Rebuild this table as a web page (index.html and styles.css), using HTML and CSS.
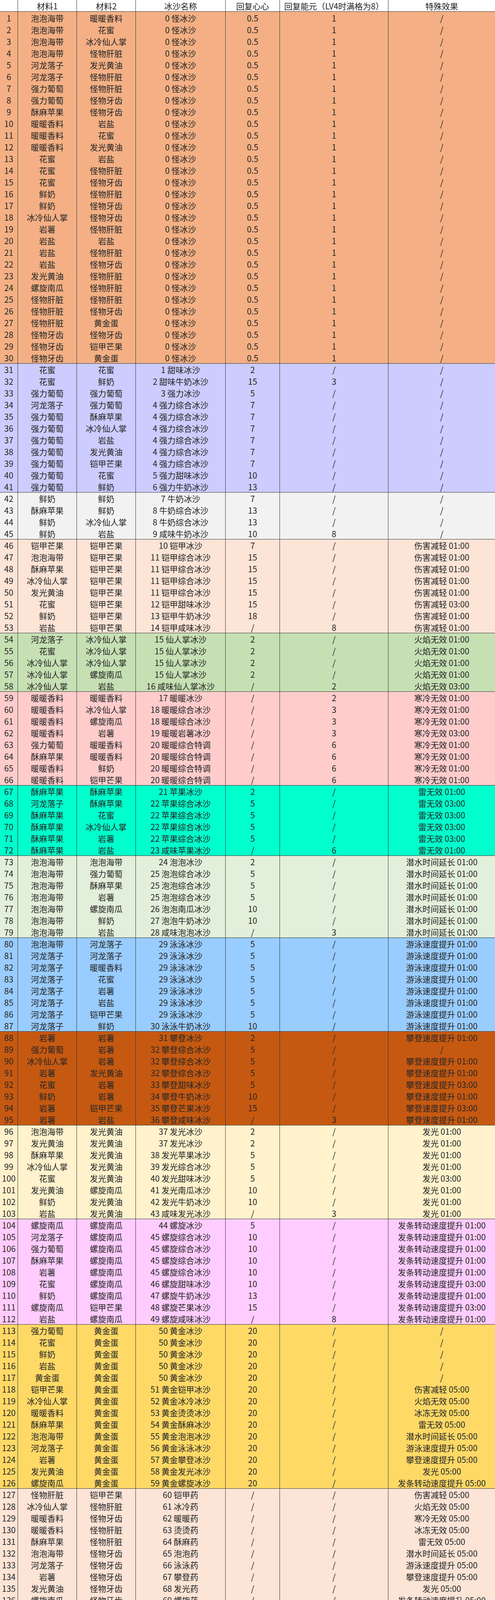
FILE: index.html
```html
<!DOCTYPE html>
<html lang="zh-CN">
<head>
<meta charset="utf-8">
<title>冰沙配方表</title>
<link rel="stylesheet" href="styles.css">
</head>
<body>
<div class="sheet">
  <div class="row head"><span></span><span>材料1</span><span>材料2</span><span>冰沙名称</span><span>回复心心</span><span>回复能元（LV4时满格为8）</span><span>特殊效果</span></div>

  <section class="grp g1">
    <div class="row"><span>1</span><span>泡泡海带</span><span>暖暖香料</span><span>0 怪冰沙</span><span>0.5</span><span>1</span><span>/</span></div>
    <div class="row"><span>2</span><span>泡泡海带</span><span>花蜜</span><span>0 怪冰沙</span><span>0.5</span><span>1</span><span>/</span></div>
    <div class="row"><span>3</span><span>泡泡海带</span><span>冰冷仙人掌</span><span>0 怪冰沙</span><span>0.5</span><span>1</span><span>/</span></div>
    <div class="row"><span>4</span><span>泡泡海带</span><span>怪物肝脏</span><span>0 怪冰沙</span><span>0.5</span><span>1</span><span>/</span></div>
    <div class="row"><span>5</span><span>河龙落子</span><span>发光黄油</span><span>0 怪冰沙</span><span>0.5</span><span>1</span><span>/</span></div>
    <div class="row"><span>6</span><span>河龙落子</span><span>怪物肝脏</span><span>0 怪冰沙</span><span>0.5</span><span>1</span><span>/</span></div>
    <div class="row"><span>7</span><span>强力葡萄</span><span>怪物肝脏</span><span>0 怪冰沙</span><span>0.5</span><span>1</span><span>/</span></div>
    <div class="row"><span>8</span><span>强力葡萄</span><span>怪物牙齿</span><span>0 怪冰沙</span><span>0.5</span><span>1</span><span>/</span></div>
    <div class="row"><span>9</span><span>酥麻苹果</span><span>怪物牙齿</span><span>0 怪冰沙</span><span>0.5</span><span>1</span><span>/</span></div>
    <div class="row"><span>10</span><span>暖暖香料</span><span>岩盐</span><span>0 怪冰沙</span><span>0.5</span><span>1</span><span>/</span></div>
    <div class="row"><span>11</span><span>暖暖香料</span><span>花蜜</span><span>0 怪冰沙</span><span>0.5</span><span>1</span><span>/</span></div>
    <div class="row"><span>12</span><span>暖暖香料</span><span>发光黄油</span><span>0 怪冰沙</span><span>0.5</span><span>1</span><span>/</span></div>
    <div class="row"><span>13</span><span>花蜜</span><span>岩盐</span><span>0 怪冰沙</span><span>0.5</span><span>1</span><span>/</span></div>
    <div class="row"><span>14</span><span>花蜜</span><span>怪物肝脏</span><span>0 怪冰沙</span><span>0.5</span><span>1</span><span>/</span></div>
    <div class="row"><span>15</span><span>花蜜</span><span>怪物牙齿</span><span>0 怪冰沙</span><span>0.5</span><span>1</span><span>/</span></div>
    <div class="row"><span>16</span><span>鲜奶</span><span>怪物肝脏</span><span>0 怪冰沙</span><span>0.5</span><span>1</span><span>/</span></div>
    <div class="row"><span>17</span><span>鲜奶</span><span>怪物牙齿</span><span>0 怪冰沙</span><span>0.5</span><span>1</span><span>/</span></div>
    <div class="row"><span>18</span><span>冰冷仙人掌</span><span>怪物牙齿</span><span>0 怪冰沙</span><span>0.5</span><span>1</span><span>/</span></div>
    <div class="row"><span>19</span><span>岩薯</span><span>怪物肝脏</span><span>0 怪冰沙</span><span>0.5</span><span>1</span><span>/</span></div>
    <div class="row"><span>20</span><span>岩盐</span><span>岩盐</span><span>0 怪冰沙</span><span>0.5</span><span>1</span><span>/</span></div>
    <div class="row"><span>21</span><span>岩盐</span><span>怪物肝脏</span><span>0 怪冰沙</span><span>0.5</span><span>1</span><span>/</span></div>
    <div class="row"><span>22</span><span>岩盐</span><span>怪物牙齿</span><span>0 怪冰沙</span><span>0.5</span><span>1</span><span>/</span></div>
    <div class="row"><span>23</span><span>发光黄油</span><span>怪物肝脏</span><span>0 怪冰沙</span><span>0.5</span><span>1</span><span>/</span></div>
    <div class="row"><span>24</span><span>螺旋南瓜</span><span>怪物肝脏</span><span>0 怪冰沙</span><span>0.5</span><span>1</span><span>/</span></div>
    <div class="row"><span>25</span><span>怪物肝脏</span><span>怪物肝脏</span><span>0 怪冰沙</span><span>0.5</span><span>1</span><span>/</span></div>
    <div class="row"><span>26</span><span>怪物肝脏</span><span>怪物牙齿</span><span>0 怪冰沙</span><span>0.5</span><span>1</span><span>/</span></div>
    <div class="row"><span>27</span><span>怪物肝脏</span><span>黄金蛋</span><span>0 怪冰沙</span><span>0.5</span><span>1</span><span>/</span></div>
    <div class="row"><span>28</span><span>怪物牙齿</span><span>怪物牙齿</span><span>0 怪冰沙</span><span>0.5</span><span>1</span><span>/</span></div>
    <div class="row"><span>29</span><span>怪物牙齿</span><span>铠甲芒果</span><span>0 怪冰沙</span><span>0.5</span><span>1</span><span>/</span></div>
    <div class="row"><span>30</span><span>怪物牙齿</span><span>黄金蛋</span><span>0 怪冰沙</span><span>0.5</span><span>1</span><span>/</span></div>
  </section>

  <section class="grp g2">
    <div class="row"><span>31</span><span>花蜜</span><span>花蜜</span><span>1 甜味冰沙</span><span>2</span><span>/</span><span>/</span></div>
    <div class="row"><span>32</span><span>花蜜</span><span>鲜奶</span><span>2 甜味牛奶冰沙</span><span>15</span><span>3</span><span>/</span></div>
    <div class="row"><span>33</span><span>强力葡萄</span><span>强力葡萄</span><span>3 强力冰沙</span><span>5</span><span>/</span><span>/</span></div>
    <div class="row"><span>34</span><span>河龙落子</span><span>强力葡萄</span><span>4 强力综合冰沙</span><span>7</span><span>/</span><span>/</span></div>
    <div class="row"><span>35</span><span>强力葡萄</span><span>酥麻苹果</span><span>4 强力综合冰沙</span><span>7</span><span>/</span><span>/</span></div>
    <div class="row"><span>36</span><span>强力葡萄</span><span>冰冷仙人掌</span><span>4 强力综合冰沙</span><span>7</span><span>/</span><span>/</span></div>
    <div class="row"><span>37</span><span>强力葡萄</span><span>岩盐</span><span>4 强力综合冰沙</span><span>7</span><span>/</span><span>/</span></div>
    <div class="row"><span>38</span><span>强力葡萄</span><span>发光黄油</span><span>4 强力综合冰沙</span><span>7</span><span>/</span><span>/</span></div>
    <div class="row"><span>39</span><span>强力葡萄</span><span>铠甲芒果</span><span>4 强力综合冰沙</span><span>7</span><span>/</span><span>/</span></div>
    <div class="row"><span>40</span><span>强力葡萄</span><span>花蜜</span><span>5 强力甜味冰沙</span><span>10</span><span>/</span><span>/</span></div>
    <div class="row"><span>41</span><span>强力葡萄</span><span>鲜奶</span><span>6 强力牛奶冰沙</span><span>13</span><span>/</span><span>/</span></div>
  </section>

  <section class="grp g3">
    <div class="row"><span>42</span><span>鲜奶</span><span>鲜奶</span><span>7 牛奶冰沙</span><span>7</span><span>/</span><span>/</span></div>
    <div class="row"><span>43</span><span>酥麻苹果</span><span>鲜奶</span><span>8 牛奶综合冰沙</span><span>13</span><span>/</span><span>/</span></div>
    <div class="row"><span>44</span><span>鲜奶</span><span>冰冷仙人掌</span><span>8 牛奶综合冰沙</span><span>13</span><span>/</span><span>/</span></div>
    <div class="row"><span>45</span><span>鲜奶</span><span>岩盐</span><span>9 咸味牛奶冰沙</span><span>10</span><span>8</span><span>/</span></div>
  </section>

  <section class="grp g4">
    <div class="row"><span>46</span><span>铠甲芒果</span><span>铠甲芒果</span><span>10 铠甲冰沙</span><span>7</span><span>/</span><span>伤害减轻 01:00</span></div>
    <div class="row"><span>47</span><span>泡泡海带</span><span>铠甲芒果</span><span>11 铠甲综合冰沙</span><span>15</span><span>/</span><span>伤害减轻 01:00</span></div>
    <div class="row"><span>48</span><span>酥麻苹果</span><span>铠甲芒果</span><span>11 铠甲综合冰沙</span><span>15</span><span>/</span><span>伤害减轻 01:00</span></div>
    <div class="row"><span>49</span><span>冰冷仙人掌</span><span>铠甲芒果</span><span>11 铠甲综合冰沙</span><span>15</span><span>/</span><span>伤害减轻 01:00</span></div>
    <div class="row"><span>50</span><span>发光黄油</span><span>铠甲芒果</span><span>11 铠甲综合冰沙</span><span>15</span><span>/</span><span>伤害减轻 01:00</span></div>
    <div class="row"><span>51</span><span>花蜜</span><span>铠甲芒果</span><span>12 铠甲甜味冰沙</span><span>15</span><span>/</span><span>伤害减轻 03:00</span></div>
    <div class="row"><span>52</span><span>鲜奶</span><span>铠甲芒果</span><span>13 铠甲牛奶冰沙</span><span>18</span><span>/</span><span>伤害减轻 01:00</span></div>
    <div class="row"><span>53</span><span>岩盐</span><span>铠甲芒果</span><span>14 铠甲咸味冰沙</span><span>/</span><span>8</span><span>伤害减轻 01:00</span></div>
  </section>

  <section class="grp g5">
    <div class="row"><span>54</span><span>河龙落子</span><span>冰冷仙人掌</span><span>15 仙人掌冰沙</span><span>2</span><span>/</span><span>火焰无效 01:00</span></div>
    <div class="row"><span>55</span><span>花蜜</span><span>冰冷仙人掌</span><span>15 仙人掌冰沙</span><span>2</span><span>/</span><span>火焰无效 01:00</span></div>
    <div class="row"><span>56</span><span>冰冷仙人掌</span><span>冰冷仙人掌</span><span>15 仙人掌冰沙</span><span>2</span><span>/</span><span>火焰无效 01:00</span></div>
    <div class="row"><span>57</span><span>冰冷仙人掌</span><span>螺旋南瓜</span><span>15 仙人掌冰沙</span><span>2</span><span>/</span><span>火焰无效 01:00</span></div>
    <div class="row"><span>58</span><span>冰冷仙人掌</span><span>岩盐</span><span>16 咸味仙人掌冰沙</span><span>/</span><span>2</span><span>火焰无效 03:00</span></div>
  </section>

  <section class="grp g6">
    <div class="row"><span>59</span><span>暖暖香料</span><span>暖暖香料</span><span>17 暖暖冰沙</span><span>/</span><span>2</span><span>寒冷无效 01:00</span></div>
    <div class="row"><span>60</span><span>暖暖香料</span><span>冰冷仙人掌</span><span>18 暖暖综合冰沙</span><span>/</span><span>3</span><span>寒冷无效 01:00</span></div>
    <div class="row"><span>61</span><span>暖暖香料</span><span>螺旋南瓜</span><span>18 暖暖综合冰沙</span><span>/</span><span>3</span><span>寒冷无效 01:00</span></div>
    <div class="row"><span>62</span><span>暖暖香料</span><span>岩薯</span><span>19 暖暖岩薯冰沙</span><span>/</span><span>3</span><span>寒冷无效 03:00</span></div>
    <div class="row"><span>63</span><span>强力葡萄</span><span>暖暖香料</span><span>20 暖暖综合特调</span><span>/</span><span>6</span><span>寒冷无效 01:00</span></div>
    <div class="row"><span>64</span><span>酥麻苹果</span><span>暖暖香料</span><span>20 暖暖综合特调</span><span>/</span><span>6</span><span>寒冷无效 01:00</span></div>
    <div class="row"><span>65</span><span>暖暖香料</span><span>鲜奶</span><span>20 暖暖综合特调</span><span>/</span><span>6</span><span>寒冷无效 01:00</span></div>
    <div class="row"><span>66</span><span>暖暖香料</span><span>铠甲芒果</span><span>20 暖暖综合特调</span><span>/</span><span>6</span><span>寒冷无效 01:00</span></div>
  </section>

  <section class="grp g7">
    <div class="row"><span>67</span><span>酥麻苹果</span><span>酥麻苹果</span><span>21 苹果冰沙</span><span>2</span><span>/</span><span>雷无效 01:00</span></div>
    <div class="row"><span>68</span><span>河龙落子</span><span>酥麻苹果</span><span>22 苹果综合冰沙</span><span>5</span><span>/</span><span>雷无效 03:00</span></div>
    <div class="row"><span>69</span><span>酥麻苹果</span><span>花蜜</span><span>22 苹果综合冰沙</span><span>5</span><span>/</span><span>雷无效 03:00</span></div>
    <div class="row"><span>70</span><span>酥麻苹果</span><span>冰冷仙人掌</span><span>22 苹果综合冰沙</span><span>5</span><span>/</span><span>雷无效 03:00</span></div>
    <div class="row"><span>71</span><span>酥麻苹果</span><span>岩薯</span><span>22 苹果综合冰沙</span><span>5</span><span>/</span><span>雷无效 03:00</span></div>
    <div class="row"><span>72</span><span>酥麻苹果</span><span>岩盐</span><span>23 咸味苹果冰沙</span><span>/</span><span>6</span><span>雷无效 01:00</span></div>
  </section>

  <section class="grp g8">
    <div class="row"><span>73</span><span>泡泡海带</span><span>泡泡海带</span><span>24 泡泡冰沙</span><span>2</span><span>/</span><span>潜水时间延长 01:00</span></div>
    <div class="row"><span>74</span><span>泡泡海带</span><span>强力葡萄</span><span>25 泡泡综合冰沙</span><span>5</span><span>/</span><span>潜水时间延长 01:00</span></div>
    <div class="row"><span>75</span><span>泡泡海带</span><span>酥麻苹果</span><span>25 泡泡综合冰沙</span><span>5</span><span>/</span><span>潜水时间延长 01:00</span></div>
    <div class="row"><span>76</span><span>泡泡海带</span><span>岩薯</span><span>25 泡泡综合冰沙</span><span>5</span><span>/</span><span>潜水时间延长 01:00</span></div>
    <div class="row"><span>77</span><span>泡泡海带</span><span>螺旋南瓜</span><span>26 泡泡南瓜冰沙</span><span>10</span><span>/</span><span>潜水时间延长 01:00</span></div>
    <div class="row"><span>78</span><span>泡泡海带</span><span>鲜奶</span><span>27 泡泡牛奶冰沙</span><span>10</span><span>/</span><span>潜水时间延长 01:00</span></div>
    <div class="row"><span>79</span><span>泡泡海带</span><span>岩盐</span><span>28 咸味泡泡冰沙</span><span>/</span><span>3</span><span>潜水时间延长 01:00</span></div>
  </section>

  <section class="grp g9">
    <div class="row"><span>80</span><span>泡泡海带</span><span>河龙落子</span><span>29 泳泳冰沙</span><span>5</span><span>/</span><span>游泳速度提升 01:00</span></div>
    <div class="row"><span>81</span><span>河龙落子</span><span>河龙落子</span><span>29 泳泳冰沙</span><span>5</span><span>/</span><span>游泳速度提升 01:00</span></div>
    <div class="row"><span>82</span><span>河龙落子</span><span>暖暖香料</span><span>29 泳泳冰沙</span><span>5</span><span>/</span><span>游泳速度提升 01:00</span></div>
    <div class="row"><span>83</span><span>河龙落子</span><span>花蜜</span><span>29 泳泳冰沙</span><span>5</span><span>/</span><span>游泳速度提升 01:00</span></div>
    <div class="row"><span>84</span><span>河龙落子</span><span>岩薯</span><span>29 泳泳冰沙</span><span>5</span><span>/</span><span>游泳速度提升 01:00</span></div>
    <div class="row"><span>85</span><span>河龙落子</span><span>岩盐</span><span>29 泳泳冰沙</span><span>5</span><span>/</span><span>游泳速度提升 01:00</span></div>
    <div class="row"><span>86</span><span>河龙落子</span><span>铠甲芒果</span><span>29 泳泳冰沙</span><span>5</span><span>/</span><span>游泳速度提升 01:00</span></div>
    <div class="row"><span>87</span><span>河龙落子</span><span>鲜奶</span><span>30 泳泳牛奶冰沙</span><span>10</span><span>/</span><span>游泳速度提升 01:00</span></div>
  </section>

  <section class="grp g10">
    <div class="row"><span>88</span><span>岩薯</span><span>岩薯</span><span>31 攀登冰沙</span><span>2</span><span>/</span><span>攀登速度提升 01:00</span></div>
    <div class="row"><span>89</span><span>强力葡萄</span><span>岩薯</span><span>32 攀登综合冰沙</span><span>5</span><span>/</span><span>/</span></div>
    <div class="row"><span>90</span><span>冰冷仙人掌</span><span>岩薯</span><span>32 攀登综合冰沙</span><span>5</span><span>/</span><span>攀登速度提升 01:00</span></div>
    <div class="row"><span>91</span><span>岩薯</span><span>发光黄油</span><span>32 攀登综合冰沙</span><span>5</span><span>/</span><span>攀登速度提升 01:00</span></div>
    <div class="row"><span>92</span><span>花蜜</span><span>岩薯</span><span>33 攀登甜味冰沙</span><span>5</span><span>/</span><span>攀登速度提升 03:00</span></div>
    <div class="row"><span>93</span><span>鲜奶</span><span>岩薯</span><span>34 攀登牛奶冰沙</span><span>10</span><span>/</span><span>攀登速度提升 01:00</span></div>
    <div class="row"><span>94</span><span>岩薯</span><span>铠甲芒果</span><span>35 攀登芒果冰沙</span><span>15</span><span>/</span><span>攀登速度提升 03:00</span></div>
    <div class="row"><span>95</span><span>岩薯</span><span>岩盐</span><span>36 攀登咸味冰沙</span><span>/</span><span>3</span><span>攀登速度提升 01:00</span></div>
  </section>

  <section class="grp g11">
    <div class="row"><span>96</span><span>泡泡海带</span><span>发光黄油</span><span>37 发光冰沙</span><span>2</span><span>/</span><span>发光 01:00</span></div>
    <div class="row"><span>97</span><span>发光黄油</span><span>发光黄油</span><span>37 发光冰沙</span><span>2</span><span>/</span><span>发光 01:00</span></div>
    <div class="row"><span>98</span><span>酥麻苹果</span><span>发光黄油</span><span>38 发光苹果冰沙</span><span>5</span><span>/</span><span>发光 01:00</span></div>
    <div class="row"><span>99</span><span>冰冷仙人掌</span><span>发光黄油</span><span>39 发光综合冰沙</span><span>5</span><span>/</span><span>发光 01:00</span></div>
    <div class="row"><span>100</span><span>花蜜</span><span>发光黄油</span><span>40 发光甜味冰沙</span><span>5</span><span>/</span><span>发光 03:00</span></div>
    <div class="row"><span>101</span><span>发光黄油</span><span>螺旋南瓜</span><span>41 发光南瓜冰沙</span><span>10</span><span>/</span><span>发光 01:00</span></div>
    <div class="row"><span>102</span><span>鲜奶</span><span>发光黄油</span><span>42 发光牛奶冰沙</span><span>10</span><span>/</span><span>发光 01:00</span></div>
    <div class="row"><span>103</span><span>岩盐</span><span>发光黄油</span><span>43 咸味发光冰沙</span><span>/</span><span>3</span><span>发光 01:00</span></div>
  </section>

  <section class="grp g12">
    <div class="row"><span>104</span><span>螺旋南瓜</span><span>螺旋南瓜</span><span>44 螺旋冰沙</span><span>5</span><span>/</span><span>发条转动速度提升 01:00</span></div>
    <div class="row"><span>105</span><span>河龙落子</span><span>螺旋南瓜</span><span>45 螺旋综合冰沙</span><span>10</span><span>/</span><span>发条转动速度提升 01:00</span></div>
    <div class="row"><span>106</span><span>强力葡萄</span><span>螺旋南瓜</span><span>45 螺旋综合冰沙</span><span>10</span><span>/</span><span>发条转动速度提升 01:00</span></div>
    <div class="row"><span>107</span><span>酥麻苹果</span><span>螺旋南瓜</span><span>45 螺旋综合冰沙</span><span>10</span><span>/</span><span>发条转动速度提升 01:00</span></div>
    <div class="row"><span>108</span><span>岩薯</span><span>螺旋南瓜</span><span>45 螺旋综合冰沙</span><span>10</span><span>/</span><span>发条转动速度提升 01:00</span></div>
    <div class="row"><span>109</span><span>花蜜</span><span>螺旋南瓜</span><span>46 螺旋甜味冰沙</span><span>10</span><span>/</span><span>发条转动速度提升 03:00</span></div>
    <div class="row"><span>110</span><span>鲜奶</span><span>螺旋南瓜</span><span>47 螺旋牛奶冰沙</span><span>13</span><span>/</span><span>发条转动速度提升 01:00</span></div>
    <div class="row"><span>111</span><span>螺旋南瓜</span><span>铠甲芒果</span><span>48 螺旋芒果冰沙</span><span>15</span><span>/</span><span>发条转动速度提升 03:00</span></div>
    <div class="row"><span>112</span><span>岩盐</span><span>螺旋南瓜</span><span>49 螺旋咸味冰沙</span><span>/</span><span>8</span><span>发条转动速度提升 01:00</span></div>
  </section>

  <section class="grp g13">
    <div class="row"><span>113</span><span>强力葡萄</span><span>黄金蛋</span><span>50 黄金冰沙</span><span>20</span><span>/</span><span>/</span></div>
    <div class="row"><span>114</span><span>花蜜</span><span>黄金蛋</span><span>50 黄金冰沙</span><span>20</span><span>/</span><span>/</span></div>
    <div class="row"><span>115</span><span>鲜奶</span><span>黄金蛋</span><span>50 黄金冰沙</span><span>20</span><span>/</span><span>/</span></div>
    <div class="row"><span>116</span><span>岩盐</span><span>黄金蛋</span><span>50 黄金冰沙</span><span>20</span><span>/</span><span>/</span></div>
    <div class="row"><span>117</span><span>黄金蛋</span><span>黄金蛋</span><span>50 黄金冰沙</span><span>20</span><span>/</span><span>/</span></div>
    <div class="row"><span>118</span><span>铠甲芒果</span><span>黄金蛋</span><span>51 黄金铠甲冰沙</span><span>20</span><span>/</span><span>伤害减轻 05:00</span></div>
    <div class="row"><span>119</span><span>冰冷仙人掌</span><span>黄金蛋</span><span>52 黄金冰冷冰沙</span><span>20</span><span>/</span><span>火焰无效 05:00</span></div>
    <div class="row"><span>120</span><span>暖暖香料</span><span>黄金蛋</span><span>53 黄金烫烫冰沙</span><span>20</span><span>/</span><span>冰冻无效 05:00</span></div>
    <div class="row"><span>121</span><span>酥麻苹果</span><span>黄金蛋</span><span>54 黄金酥麻冰沙</span><span>20</span><span>/</span><span>雷无效 05:00</span></div>
    <div class="row"><span>122</span><span>泡泡海带</span><span>黄金蛋</span><span>55 黄金泡泡冰沙</span><span>20</span><span>/</span><span>潜水时间延长 05:00</span></div>
    <div class="row"><span>123</span><span>河龙落子</span><span>黄金蛋</span><span>56 黄金泳泳冰沙</span><span>20</span><span>/</span><span>游泳速度提升 05:00</span></div>
    <div class="row"><span>124</span><span>岩薯</span><span>黄金蛋</span><span>57 黄金攀登冰沙</span><span>20</span><span>/</span><span>攀登速度提升 05:00</span></div>
    <div class="row"><span>125</span><span>发光黄油</span><span>黄金蛋</span><span>58 黄金发光冰沙</span><span>20</span><span>/</span><span>发光 05:00</span></div>
    <div class="row"><span>126</span><span>螺旋南瓜</span><span>黄金蛋</span><span>59 黄金螺旋冰沙</span><span>20</span><span>/</span><span>发条转动速度提升 05:00</span></div>
  </section>

  <section class="grp g14">
    <div class="row"><span>127</span><span>怪物肝脏</span><span>铠甲芒果</span><span>60 铠甲药</span><span>/</span><span>/</span><span>伤害减轻 05:00</span></div>
    <div class="row"><span>128</span><span>冰冷仙人掌</span><span>怪物肝脏</span><span>61 冰冷药</span><span>/</span><span>/</span><span>火焰无效 05:00</span></div>
    <div class="row"><span>129</span><span>暖暖香料</span><span>怪物牙齿</span><span>62 暖暖药</span><span>/</span><span>/</span><span>寒冷无效 05:00</span></div>
    <div class="row"><span>130</span><span>暖暖香料</span><span>怪物肝脏</span><span>63 烫烫药</span><span>/</span><span>/</span><span>冰冻无效 05:00</span></div>
    <div class="row"><span>131</span><span>酥麻苹果</span><span>怪物肝脏</span><span>64 酥麻药</span><span>/</span><span>/</span><span>雷无效 05:00</span></div>
    <div class="row"><span>132</span><span>泡泡海带</span><span>怪物牙齿</span><span>65 泡泡药</span><span>/</span><span>/</span><span>潜水时间延长 05:00</span></div>
    <div class="row"><span>133</span><span>河龙落子</span><span>怪物牙齿</span><span>66 泳泳药</span><span>/</span><span>/</span><span>游泳速度提升 05:00</span></div>
    <div class="row"><span>134</span><span>岩薯</span><span>怪物牙齿</span><span>67 攀登药</span><span>/</span><span>/</span><span>攀登速度提升 05:00</span></div>
    <div class="row"><span>135</span><span>发光黄油</span><span>怪物牙齿</span><span>68 发光药</span><span>/</span><span>/</span><span>发光 05:00</span></div>
    <div class="row"><span>136</span><span>螺旋南瓜</span><span>怪物牙齿</span><span>69 螺旋药</span><span>/</span><span>/</span><span>发条转动速度提升 05:00</span></div>
  </section>
</div>
</body>
</html>
```

FILE: styles.css
```css
html, body {
  margin: 0;
  padding: 0;
  background: #ffffff;
}

.sheet {
  width: 1268px;
  font-family: "Noto Sans CJK SC", "Noto Sans", sans-serif;
  font-size: 21px;
  color: #262626;
  border-bottom: 1px solid #333333;
}

.row {
  display: grid;
  grid-template-columns: 45px 151px 151px 230px 139px 278px 274px;
  grid-template-rows: 100%;
  height: 30px;
  box-sizing: border-box;
}

.row > span {
  display: block;
  min-height: 0;
  border-left: 1px solid #333333;
  text-align: center;
  white-space: nowrap;
  padding-top: 3px;
  line-height: 27px;
  box-sizing: border-box;
}

.row > span:first-child {
  border-left: none;
}

.head {
  background: #ffffff;
  border-bottom: 1px solid #333333;
}

.head > span {
  padding-top: 2px;
}

.grp + .grp > .row:first-child {
  border-top: 1px solid #333333;
}

.grp + .grp > .row:first-child > span {
  padding-top: 2px;
}

.g1 { background: #f4b084; }
.g2 { background: #ccccff; }
.g3 { background: #f2f2f2; }
.g4 { background: #fce4d6; }
.g5 { background: #c6e0b4; }
.g6 { background: #ffcccc; }
.g7 { background: #00ffcc; }
.g8 { background: #e2efda; }
.g9 { background: #99ccff; }
.g10 { background: #c65911; }
.g11 { background: #fff2cc; }
.g12 { background: #ffccff; }
.g13 { background: #ffd966; }
.g14 { background: #fce4d6; }
```
